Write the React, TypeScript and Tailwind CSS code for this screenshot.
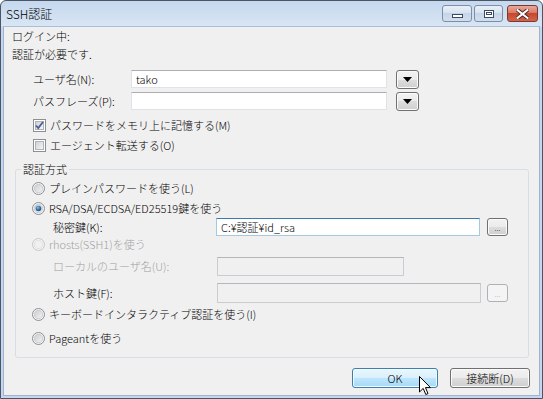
import React from "react";

const FONT = { fontFamily: '"Noto Sans CJK JP", "Liberation Sans", sans-serif' };

function Checkbox({ checked }: { checked?: boolean }) {
  return (
    <svg width="13" height="13" viewBox="0 0 13 13" className="shrink-0">
      <defs>
        <linearGradient id="cbg" x1="0" y1="0" x2="1" y2="1">
          <stop offset="0" stopColor="#cbcfd5" />
          <stop offset="1" stopColor="#f7f7f7" />
        </linearGradient>
      </defs>
      <rect x="0.5" y="0.5" width="12" height="12" fill="#fff" stroke="#8e8f8f" />
      <rect x="2.5" y="2.5" width="8" height="8" fill="url(#cbg)" stroke="#aeb3b9" />
      {checked && (
        <path d="M3 6.5 L5.2 9 L10 3" fill="none" stroke="#4a5f97" strokeWidth="1.8" />
      )}
    </svg>
  );
}

function Radio({ checked, disabled }: { checked?: boolean; disabled?: boolean }) {
  return (
    <svg width="13" height="13" viewBox="0 0 13 13" className="shrink-0">
      <defs>
        <linearGradient id="rbg" x1="0" y1="0" x2="1" y2="1">
          <stop offset="0" stopColor="#c8ccd2" />
          <stop offset="1" stopColor="#f5f5f5" />
        </linearGradient>
        <radialGradient id="rdot" cx="0.4" cy="0.35" r="0.7">
          <stop offset="0" stopColor="#8ec0ec" />
          <stop offset="0.6" stopColor="#2e6aa9" />
          <stop offset="1" stopColor="#1d4b83" />
        </radialGradient>
      </defs>
      <circle cx="6.5" cy="6.5" r="6" fill="#f4f4f4" stroke={disabled ? "#c6c6c6" : "#8e8f8f"} />
      <circle cx="6.5" cy="6.5" r="4.2" fill={disabled ? "#f0f0f0" : "url(#rbg)"} stroke={disabled ? "#dadada" : "#c3c6cb"} strokeWidth="0.8" />
      {checked && <circle cx="6.5" cy="6.5" r="2.8" fill="url(#rdot)" />}
    </svg>
  );
}

function DropBtn() {
  return (
    <div className="w-[23px] h-[19px] shrink-0 rounded-[3px] border border-[#707070] bg-[linear-gradient(#f2f2f2,#ebebeb_50%,#dddddd_50%,#cfcfcf)] shadow-[inset_0_0_0_1px_#fbfbfb] flex items-center justify-center">
      <svg width="9" height="5" viewBox="0 0 9 5">
        <path d="M0 0 H9 L4.5 5 Z" fill="#000" />
      </svg>
    </div>
  );
}

function DotsBtn({ disabled }: { disabled?: boolean }) {
  return (
    <div
      className={
        disabled
          ? "w-[21px] h-[18px] shrink-0 rounded-[3px] border border-[#adb2b5] bg-[#f4f4f4] flex items-end justify-center text-[8px] leading-[10px] text-[#a0a0a0]"
          : "w-[21px] h-[18px] shrink-0 rounded-[3px] border border-[#707070] bg-[linear-gradient(#f2f2f2,#ebebeb_50%,#dddddd_50%,#cfcfcf)] shadow-[inset_0_0_0_1px_#fbfbfb] flex items-end justify-center text-[8px] leading-[10px] text-black"
      }
    >
      <span className="pb-[2px]">...</span>
    </div>
  );
}

function Input({
  w,
  h,
  value,
  state,
}: {
  w: string;
  h: string;
  value?: string;
  state?: "focus" | "disabled";
}) {
  const base =
    state === "focus"
      ? "border border-[#a4c9e3] border-t-[#3d7bad] bg-white"
      : state === "disabled"
      ? "border border-[#c9cdd2] border-t-[#b3b6bb] bg-[#f0f0f0]"
      : "border border-[#dfe3e8] border-t-[#abadb3] bg-white";
  return (
    <div className={`${w} ${h} ${base} shrink-0 flex items-center pl-[4px] text-[11px] text-black`}>
      {value}
    </div>
  );
}

function CaptionButtons() {
  return (
    <div className="flex items-start gap-[4px] mt-[4px] mr-[4px]">
      <div className="flex gap-[2px]">
        <div className="w-[30px] h-[17px] rounded-[3px] border border-[#7d8fa8] bg-[linear-gradient(#e9eff7,#d6e2f0_50%,#c6d6ea_50%,#d2deed)] flex items-center justify-center">
          <div className="w-[11px] h-[4px] border border-[#3b4a60] bg-white mt-[4px]" />
        </div>
        <div className="w-[29px] h-[17px] rounded-[3px] border border-[#7d8fa8] bg-[linear-gradient(#e9eff7,#d6e2f0_50%,#c6d6ea_50%,#d2deed)] flex items-center justify-center">
          <div className="w-[10px] h-[8px] border border-[#3b4a60] bg-white flex items-center justify-center">
            <div className="w-[6px] h-[3px] border border-[#3b4a60]" />
          </div>
        </div>
      </div>
      <div className="w-[31px] h-[17px] rounded-[3px] border border-[#7a3a30] bg-[linear-gradient(#e9a99a,#d9745f_50%,#c8472f_50%,#d4644a)] flex items-center justify-center">
        <svg width="13" height="10" viewBox="0 0 13 10">
          <path d="M1.5 1 L11.5 9 M11.5 1 L1.5 9" stroke="#4a2a26" strokeWidth="4" strokeLinecap="square" />
          <path d="M1.5 1 L11.5 9 M11.5 1 L1.5 9" stroke="#fff" strokeWidth="2" strokeLinecap="square" />
        </svg>
      </div>
    </div>
  );
}

export default function App() {
  return (
    <div className="w-[543px] h-[399px] bg-white font-light" style={FONT}>
      <div className="w-[543px] h-[399px] flex flex-col bg-[linear-gradient(#c5d8ee,#d8e5f4_25px,#c4d7ee_26px,#c4d7ee)] border border-[#4b5563] rounded-t-[6px] overflow-hidden">
        {/* Title bar */}
        <div className="h-[25px] shrink-0 flex items-start justify-between">
          <div className="pl-[5px] pt-[5px] text-[12px] leading-[16px] text-black">SSH認証</div>
          <CaptionButtons />
        </div>
        {/* Client */}
        <div className="relative ml-[2px] mr-[2px] mb-[2px] flex-1 bg-[#f0f0f0] border border-[#9fb4cc] border-t-[#a9bfd8] text-[11px] text-black flex flex-col pl-[8px]">
          <div className="h-[18px] flex items-center">ログイン中:</div>
          <div className="h-[18px] flex items-center">認証が必要です.</div>

          <div className="mt-[6px] h-[20px] flex items-center">
            <div className="ml-[21px] w-[98px]">ユーザ名(N):</div>
            <Input w="w-[256px]" h="h-[18px]" value="tako" />
            <div className="ml-[9px]">
              <DropBtn />
            </div>
          </div>
          <div className="mt-[2px] h-[20px] flex items-center">
            <div className="ml-[21px] w-[98px]">パスフレーズ(P):</div>
            <Input w="w-[256px]" h="h-[18px]" />
            <div className="ml-[9px]">
              <DropBtn />
            </div>
          </div>

          <div className="mt-[6px] h-[16px] flex items-center ml-[21px] gap-[4px]">
            <Checkbox checked />
            <span>パスワードをメモリ上に記憶する(M)</span>
          </div>
          <div className="mt-[4px] h-[16px] flex items-center ml-[21px] gap-[4px]">
            <Checkbox />
            <span>エージェント転送する(O)</span>
          </div>

          {/* Group box */}
          <div className="relative mt-[16px] ml-[3px] w-[514px] h-[189px] border border-[#d5dfe5] rounded-[3px] flex flex-col">
            <div className="absolute -top-[9px] left-[5px] px-[2px] bg-[#f0f0f0] leading-[16px]">認証方式</div>
            <div className="mt-[10px] h-[16px] flex items-center pl-[16px] gap-[4px]">
              <Radio />
              <span>プレインパスワードを使う(L)</span>
            </div>
            <div className="mt-[4px] h-[16px] flex items-center pl-[16px] gap-[4px]">
              <Radio checked />
              <span>RSA/DSA/ECDSA/ED25519鍵を使う</span>
            </div>
            <div className="mt-[2px] h-[18px] flex items-center pl-[37px]">
              <div className="w-[163px]">秘密鍵(K):</div>
              <Input w="w-[264px]" h="h-[18px]" value="C:¥認証¥id_rsa" state="focus" />
              <div className="ml-[7px]">
                <DotsBtn />
              </div>
            </div>
            <div className="h-[16px] flex items-center pl-[16px] gap-[4px] text-[#a0a0a0]">
              <Radio disabled />
              <span>rhosts(SSH1)を使う</span>
            </div>
            <div className="mt-[4px] h-[20px] flex items-center pl-[37px]">
              <div className="w-[164px] text-[#a0a0a0]">ローカルのユーザ名(U):</div>
              <Input w="w-[187px]" h="h-[19px]" state="disabled" />
            </div>
            <div className="mt-[7px] h-[20px] flex items-center pl-[37px]">
              <div className="w-[164px]">ホスト鍵(F):</div>
              <Input w="w-[264px]" h="h-[20px]" state="disabled" />
              <div className="ml-[6px]">
                <DotsBtn disabled />
              </div>
            </div>
            <div className="mt-[3px] h-[16px] flex items-center pl-[16px] gap-[4px]">
              <Radio />
              <span>キーボードインタラクティブ認証を使う(I)</span>
            </div>
            <div className="mt-[8px] h-[16px] flex items-center pl-[16px] gap-[4px]">
              <Radio />
              <span>Pageantを使う</span>
            </div>
          </div>

          <div className="mt-[10px] flex justify-end gap-[12px] pr-[9px]">
            <div className="w-[86px] h-[20px] rounded-[3px] border border-[#3c7fb1] bg-[linear-gradient(#eaf6fd,#d9f0fc_50%,#bee6fd_50%,#a7d9f5)] shadow-[inset_0_0_0_1px_#f4fbfe] flex items-center justify-center">
              OK
            </div>
            <div className="w-[80px] h-[20px] rounded-[3px] border border-[#707070] bg-[linear-gradient(#f2f2f2,#ebebeb_50%,#dddddd_50%,#cfcfcf)] shadow-[inset_0_0_0_1px_#fbfbfb] flex items-center justify-center">
              接続断(D)
            </div>
          </div>

          {/* mouse cursor overlay */}
          <svg
            className="absolute left-[415px] top-[349px]"
            width="13"
            height="20"
            viewBox="0 0 13 20"
          >
            <path
              d="M0.5 0.5 L0.5 16 L4.2 12.4 L6.8 18.5 L9 17.6 L6.5 11.6 L11.5 11.6 Z"
              fill="#fff"
              stroke="#000"
              strokeWidth="1"
              strokeLinejoin="miter"
            />
          </svg>
        </div>
      </div>
    </div>
  );
}
